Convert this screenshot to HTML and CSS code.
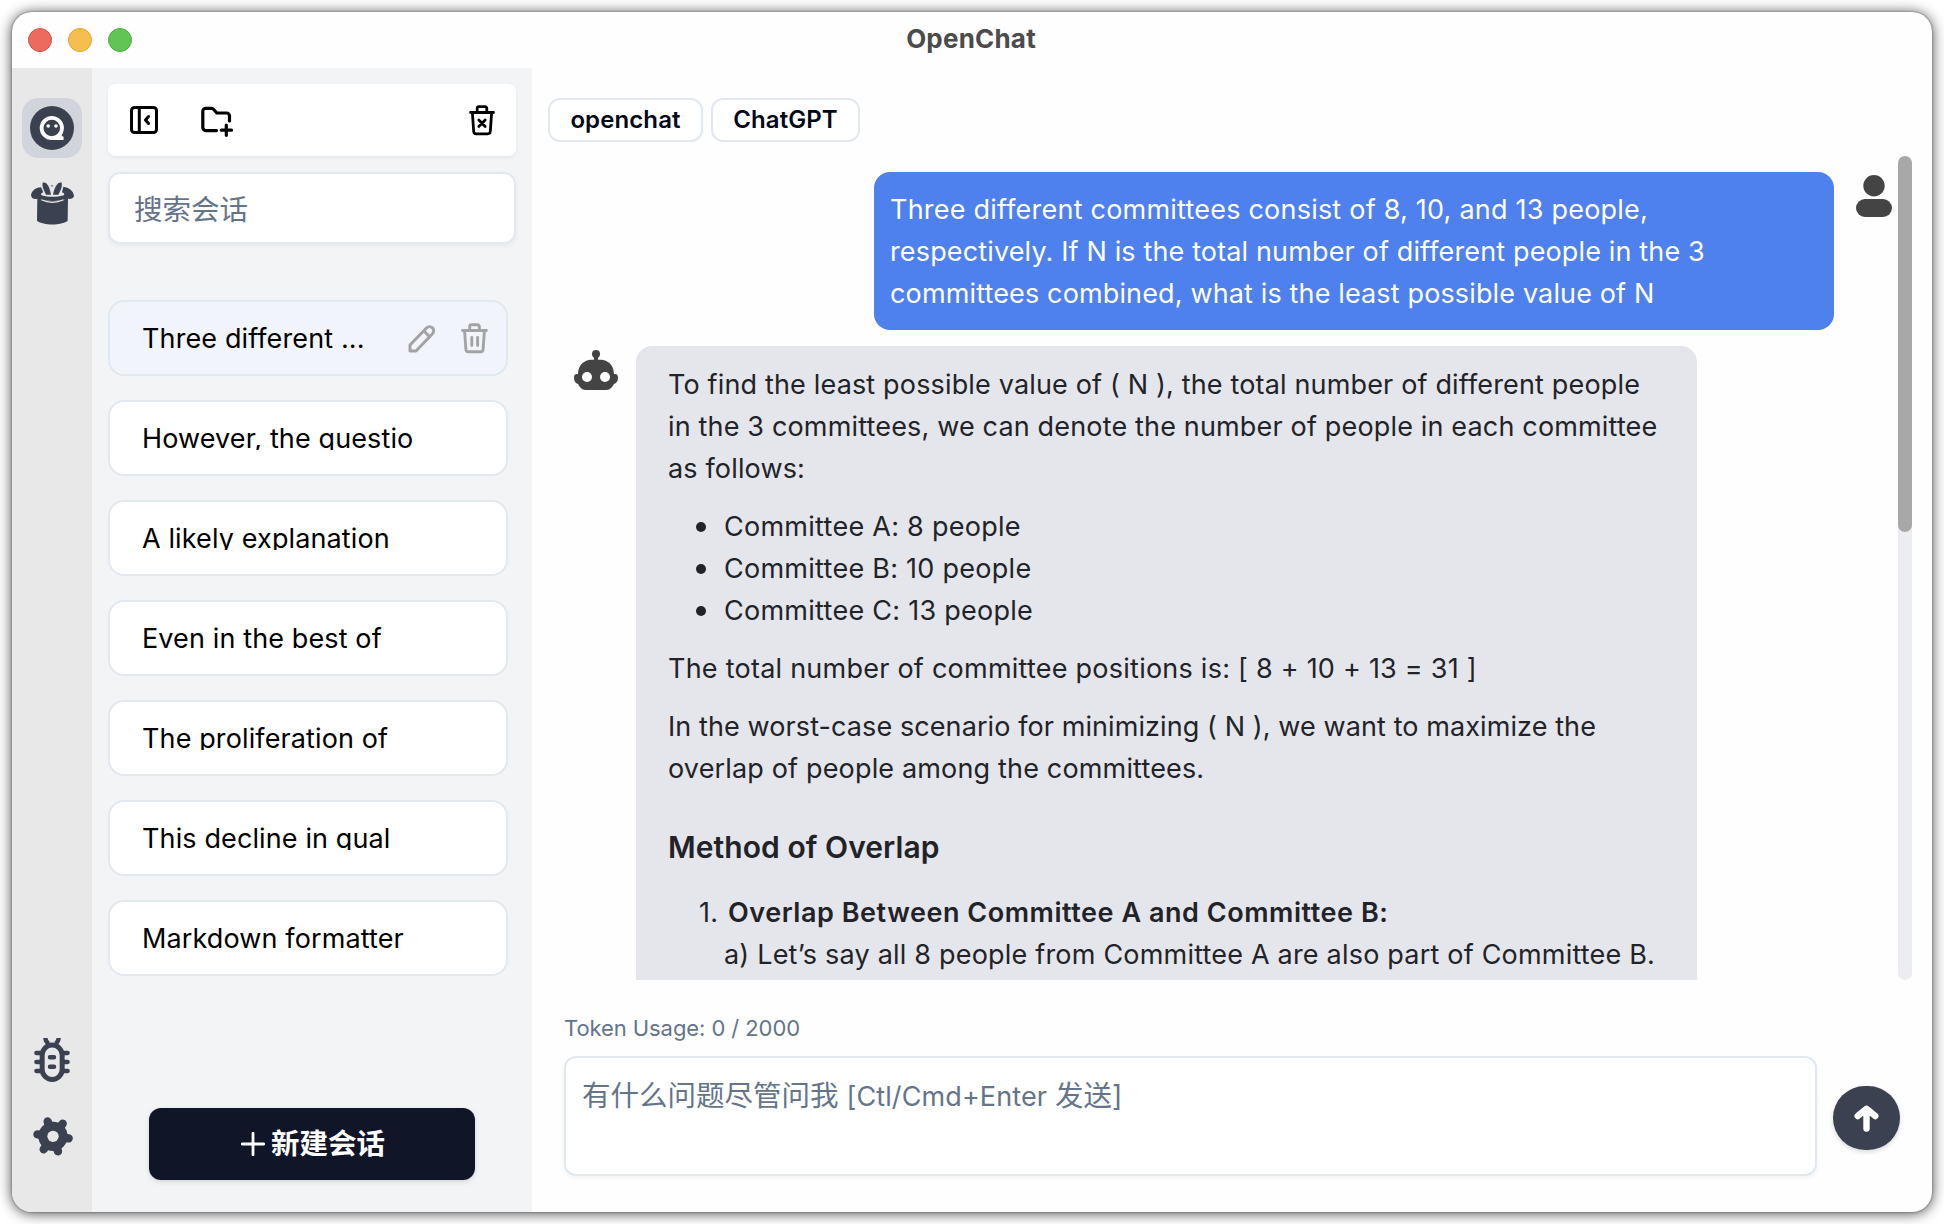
FILE: index.html
```html
<!DOCTYPE html>
<html lang="zh">
<head>
<meta charset="utf-8">
<title>OpenChat</title>
<link rel="stylesheet" href="styles.css">
</head>
<body>
<div class="window">
  <header class="titlebar">
    <div class="lights"><i class="light red"></i><i class="light yellow"></i><i class="light green"></i></div>
    <h1 class="title">OpenChat</h1>
  </header>
  <div class="body">
    <nav class="rail">
      <a class="rail-item active">
        <svg width="44" height="44" viewBox="0 0 44 44"><circle cx="22" cy="22" r="22" fill="#3b4150"/><circle cx="21.8" cy="22" r="10.2" fill="none" stroke="#fff" stroke-width="3.8"/><path d="M21.8 32.2H33.5" stroke="#fff" stroke-width="3.6"/><path d="M30.5 27.5L33.5 32.5H28Z" fill="#fff"/><circle cx="18.2" cy="20" r="1.8" fill="#fff"/><circle cx="26" cy="20" r="1.8" fill="#fff"/></svg>
      </a>
      <a class="rail-item">
        <svg width="43" height="43" viewBox="0 0 129 128" fill="#3b4150"><path d="M0 38C3 24 16 15 30 15L37 30C29 33 28 38 34 40C50 45 80 45 96 40C102 38 101 33 93 30L97 14C113 17 126 25 129 40C129 48 122 51 110 50C90 59 40 59 20 50C8 52 0 48 0 38Z"/><path d="M19 48C45 60 85 60 111 48L110 116C90 131 38 131 18 116Z"/><path d="M31 53Q64 68 98 53" fill="none" stroke="#e8e8e8" stroke-width="3.5"/><path d="M35 2C46-3 56 12 60 38H45C39 24 32 14 35 2ZM92 2C82-3 71 12 66 38H82C88 25 95 14 92 2Z"/><path d="M58 10H68L63 14Z"/></svg>
      </a>
      <a class="rail-item push">
        <svg width="36" height="44" viewBox="42 54 108 132" fill="none" stroke="#3b4150" stroke-width="15" stroke-linecap="round"><rect x="66.500" y="75" width="60" height="103.500" rx="30"/><path stroke-width="13" d="M49 99H62M49 126H62M49 153H62M131 99H143M131 126H143M131 153H143"/><path stroke-width="13.500" d="M90 112H102M90 140H102"/><path stroke-width="13" stroke-linecap="butt" d="M76 53Q76 64 86 71M116 53Q116 64 107 71"/></svg>
      </a>
      <a class="rail-item gear">
        <svg width="40" height="39" viewBox="38 290 120 117"><g stroke="#3b4150" stroke-width="25" stroke-linecap="round"><path d="M98 348L82 303.500M98 348L127 310M98 348L145 354M98 348L113 393M98 348L70 387M98 348L51.500 342"/></g><circle cx="98" cy="348" r="44" fill="#3b4150"/><circle cx="98" cy="348" r="17" fill="#e8e8e8"/></svg>
      </a>
    </nav>
    <aside class="sidebar">
      <div class="tools">
        <svg width="28" height="28" viewBox="0 0 28 28" fill="none" stroke="#000" stroke-width="3" stroke-linecap="round" stroke-linejoin="round"><rect x="1.500" y="1.500" width="25" height="25" rx="3"/><path d="M9.300 2V26M18.500 10.500L15.500 14L18.500 17.500" /></svg>
        <svg class="folder" width="34" height="32" viewBox="0 0 34 32" fill="none" stroke="#000" stroke-width="3.200" stroke-linecap="round" stroke-linejoin="round"><path d="M16.500 25.600H5.800A3 3 0 0 1 2.800 22.600V6.300A3 3 0 0 1 5.800 3.300H11.500Q12.600 3.300 13.500 4.300L16.800 8H26.500A3 3 0 0 1 29.500 11V16M26.300 20V30.300M21.300 25.200H31.500"/></svg>
        <svg class="clear" width="26" height="31" viewBox="0 0 26 31" fill="none" stroke="#000" stroke-width="2.800" stroke-linecap="round" stroke-linejoin="round"><path d="M1.500 7.500H24.500M8.200 7V3.300A1.600 1.600 0 0 1 9.800 1.700H16.200A1.600 1.600 0 0 1 17.800 3.300V7M3.400 8L4.700 26.500A2.500 2.500 0 0 0 7.200 28.800H18.800A2.500 2.500 0 0 0 21.300 26.500L22.600 8M9.800 15L16.200 21.400M16.200 15L9.800 21.400"/></svg>
      </div>
      <div class="search">搜索会话</div>
      <ul class="chats">
        <li class="chat selected"><span class="name">Three different ...</span>
          <svg class="edit" width="27" height="28" viewBox="0 0 27 28" fill="none" stroke="#a3a3a3" stroke-width="3" stroke-linejoin="round"><path d="M2 26V20L18.500 3A4 4 0 0 1 24.500 8.800L8 26ZM16 6L21.500 11.800"/></svg>
          <svg width="27" height="31" viewBox="0 0 27 31" fill="none" stroke="#a3a3a3" stroke-width="2.900" stroke-linecap="round" stroke-linejoin="round"><path d="M1.600 7.500H25.400M8.700 7V3.300A1.600 1.600 0 0 1 10.300 1.700H16.700A1.600 1.600 0 0 1 18.300 3.300V7M3.600 8L4.900 26.500A2.500 2.500 0 0 0 7.400 28.800H19.600A2.500 2.500 0 0 0 22.100 26.500L23.400 8M10.800 14.500V22.500M16.600 14.500V22.500"/></svg>
        </li>
        <li class="chat"><span class="name">However, the questio</span></li>
        <li class="chat"><span class="name">A likely explanation</span></li>
        <li class="chat"><span class="name">Even in the best of</span></li>
        <li class="chat"><span class="name">The proliferation of</span></li>
        <li class="chat"><span class="name">This decline in qual</span></li>
        <li class="chat"><span class="name">Markdown formatter</span></li>
      </ul>
      <button class="new"><svg width="24" height="24" viewBox="0 0 24 24" stroke="#fff" stroke-width="2.800" stroke-linecap="round"><path d="M12 1.200V22.800M1.200 12H22.800"/></svg>新建会话</button>
    </aside>
    <main class="main">
      <div class="tags"><span class="tag">openchat</span><span class="tag gpt">ChatGPT</span></div>
      <div class="scroller">
        <div class="messages">
          <div class="row user">
            <div class="bubble"><span class="loose">Three different committees consist of 8, 10, and 13 people,</span><br>respectively. If N is the total number of different people in the 3<br>committees combined, what is the least possible value of N</div>
            <svg class="avatar-user" width="36" height="42" viewBox="0 0 36 42" fill="#444"><circle cx="18" cy="10.700" r="10.700"/><rect y="24" width="36" height="18" rx="9"/></svg>
          </div>
          <div class="row bot">
            <svg class="avatar-bot" width="44" height="40" viewBox="132 810 132 120" fill="#444"><path d="M144 882C144 855 163 839 184 839H212C233 839 252 855 252 882C262 881 264 886 264 893C264 904 259 910 252 912C248 920 240 930 230 930H166C156 930 148 920 144 912C137 910 132 904 132 893C132 886 134 881 144 882Z"/><path d="M192 825H204V842H192Z"/><circle cx="198" cy="822" r="12"/><circle cx="171" cy="891" r="15" fill="#fff"/><circle cx="225" cy="891" r="15" fill="#fff"/></svg>
            <div class="bubble">
              <p>To find the least possible value of ( N ), the total number of different people<br>in the 3 committees, we can denote the number of people in each committee<br>as follows:</p>
              <ul class="dots"><li>Committee A: 8 people</li><li>Committee B: 10 people</li><li>Committee C: 13 people</li></ul>
              <p class="loose">The total number of committee positions is: [ 8 + 10 + 13 = 31 ]</p>
              <p><span class="tight">In the worst-case scenario for minimizing ( N ), we want to maximize the</span><br>overlap of people among the committees.</p>
              <h3>Method of Overlap</h3>
              <div class="step"><span class="num">1.</span><div><strong>Overlap Between Committee A and Committee B:</strong><br>a) Let’s say all 8 people from Committee A are also part of Committee B.</div></div>
            </div>
          </div>
        </div>
        <div class="track"><div class="thumb"></div></div>
      </div>
      <div class="usage">Token Usage: 0 / 2000</div>
      <div class="composer">
        <div class="input">有什么问题尽管问我 <span class="latin">[Ctl/Cmd+Enter</span> 发送]</div>
        <button class="send"><svg width="25" height="27" viewBox="0 0 25 27" fill="none" stroke="#fff" stroke-width="6.400" stroke-linecap="round" stroke-linejoin="round"><path d="M12.500 23.500V4M3.700 11L12.500 3.700L21.300 11"/></svg></button>
      </div>
    </main>
  </div>
</div>
</body>
</html>
```
FILE: styles.css
```css
* { box-sizing: border-box; margin: 0; padding: 0; }
body {
  height: 1224px;
  padding: 12px;
  overflow: hidden;
  background: #fff;
  color: #000;
  font: 400 27px/42px Inter, "Noto Sans CJK SC", sans-serif;
}
svg { display: block; flex: none; }
button { border: 0; font: inherit; }
.window {
  display: flex;
  flex-direction: column;
  width: 1920px;
  height: 1200px;
  border-radius: 20px;
  overflow: hidden;
  background: #fefefe;
  box-shadow: 0 0 2px rgba(0, 0, 0, .45), 0 1px 14px rgba(0, 0, 0, .75);
}
.titlebar {
  display: grid;
  grid-template-columns: 1fr auto 1fr;
  align-items: center;
  height: 56px;
  padding: 0 16px;
}
.lights { display: flex; gap: 16px; }
.light { width: 24px; height: 24px; border-radius: 50%; border: 1px solid; }
.red { background: #ed6a5e; border-color: #d55448; }
.yellow { background: #f5bf4f; border-color: #d9a33c; }
.green { background: #61c554; border-color: #4faa41; }
.title { height: 56px; font-size: 26px; font-weight: 650; line-height: 53px; letter-spacing: .2px; color: #4b4b4b; margin-left: -2px; }
.body { display: flex; flex: 1; min-height: 0; }

.rail {
  display: flex;
  flex-direction: column;
  align-items: center;
  width: 80px;
  padding: 30px 0 56px;
  background: #e8e8e8;
}
.rail-item { display: flex; justify-content: center; align-items: center; width: 60px; }
.active { height: 60px; margin-bottom: 24px; border-radius: 16px; background: #d1d5db; }
.push { margin-top: auto; }
.gear { margin-top: 35px; padding-left: 2px; }

.sidebar {
  display: flex;
  flex-direction: column;
  width: 440px;
  padding: 16px 16px 32px;
  background: #f3f4f6;
}
.tools {
  display: flex;
  align-items: center;
  height: 72px;
  padding: 0 21px 0 22px;
  border-radius: 8px;
  background: #fff;
  box-shadow: 0 2px 4px rgba(0, 0, 0, .05);
}
.folder { margin-left: 42px; margin-top: 2px; }
.clear { margin-left: auto; }
.search {
  height: 72px;
  margin-top: 16px;
  padding: 0 24px;
  border: 2px solid #e2e8f0;
  border-radius: 12px;
  background: #fff;
  box-shadow: 0 2px 4px rgba(0, 0, 0, .05);
  font-size: 28.500px;
  line-height: 71px;
  color: #64748b;
}
.chats { display: flex; flex-direction: column; gap: 24px; margin: 56px 8px 0 0; list-style: none; }
.chat {
  display: flex;
  align-items: center;
  height: 76px;
  padding: 0 18px 0 32px;
  border: 2px solid #e2e8f0;
  border-radius: 16px;
  background: #fff;
}
.selected { background: #f1f5fb; }
.name { height: 28px; margin-bottom: 4px; overflow: hidden; line-height: 34px; white-space: nowrap; letter-spacing: .12px; }
.edit { margin: 2px 26px 0 auto; }
.new {
  display: flex;
  align-items: center;
  justify-content: center;
  gap: 6px;
  width: 326px;
  height: 72px;
  margin: auto 0 0 41px;
  border-radius: 12px;
  background: #111528;
  box-shadow: 0 2px 5px rgba(0, 0, 0, .12);
  color: #fff;
  font-size: 28.500px;
  font-weight: 700;
}
.new svg { margin-left: 2px; }

.main { display: flex; flex-direction: column; flex: 1; min-width: 0; }
.tags { display: flex; gap: 8px; padding: 30px 16px 14px; }
.tag {
  width: 155px;
  height: 44px;
  border: 2px solid #e2e8f0;
  border-radius: 12px;
  background: #fff;
  color: #020817;
  text-align: center;
  font-size: 24px;
  font-weight: 600;
  line-height: 40px;
  letter-spacing: .1px;
}
.gpt { width: 149px; }
.scroller { display: flex; justify-content: space-between; height: 824px; padding-right: 20px; }
.messages { width: 1344px; margin-left: 16px; padding-top: 16px; overflow: hidden; }
.row { display: flex; align-items: flex-start; }
.user .bubble {
  width: 960px;
  margin-left: 326px;
  padding: 17px 16px 15px;
  border-radius: 16px;
  background: #4e80ee;
  color: #fff;
  letter-spacing: .14px;
}
.user .loose { letter-spacing: .22px; }
.avatar-user { margin: 3px 0 0 22px; }
.bot { margin-top: 16px; padding-left: 26px; }
.avatar-bot { margin-top: 4px; }
.bot .bubble {
  width: 1061px;
  margin-left: 18px;
  padding: 18px 32px 32px;
  border-radius: 16px;
  background: #e5e6eb;
  color: #212328;
  letter-spacing: .16px;
  white-space: nowrap;
}
.bot p { margin-bottom: 16px; }
.bot .loose { letter-spacing: .24px; }
.tight { letter-spacing: .09px; }
.dots { margin-bottom: 16px; list-style: none; letter-spacing: .27px; }
.dots li { display: flex; align-items: center; gap: 18px; padding-left: 28px; }
.dots li::before { content: ""; width: 10px; height: 10px; border-radius: 50%; background: #212328; }
h3 { margin: 37px 0 25px; font-size: 30px; font-weight: 600; line-height: 40px; letter-spacing: .06px; }
.step { display: flex; letter-spacing: .2px; }
.num { width: 56px; padding-left: 31px; }
.step strong { margin-left: 4px; font-weight: 600; letter-spacing: .54px; }
.track { width: 14px; height: 824px; border-radius: 7px; background: #ecedf1; }
.thumb { height: 376px; border-radius: 7px; background: #a8a8a8; }
.usage { margin: 32px 0 0 32px; font-size: 22px; line-height: 32px; letter-spacing: -.08px; color: #64748b; }
.composer { display: flex; align-items: center; gap: 16px; margin: 12px 32px 0; }
.input {
  width: 1253px;
  height: 120px;
  padding: 18px 16px;
  border: 2px solid #e2e8f0;
  border-radius: 12px;
  background: #fff;
  box-shadow: 0 2px 4px rgba(0, 0, 0, .05);
  color: #64748b;
  font-size: 28.500px;
  line-height: 40px;
}
.latin { font-size: 27px; letter-spacing: .1px; }
.send {
  display: flex;
  align-items: center;
  justify-content: center;
  width: 67px;
  height: 64px;
  margin-top: 4px;
  border-radius: 34px;
  background: #3b4150;
  box-shadow: 0 2px 5px rgba(0, 0, 0, .15);
}
```
